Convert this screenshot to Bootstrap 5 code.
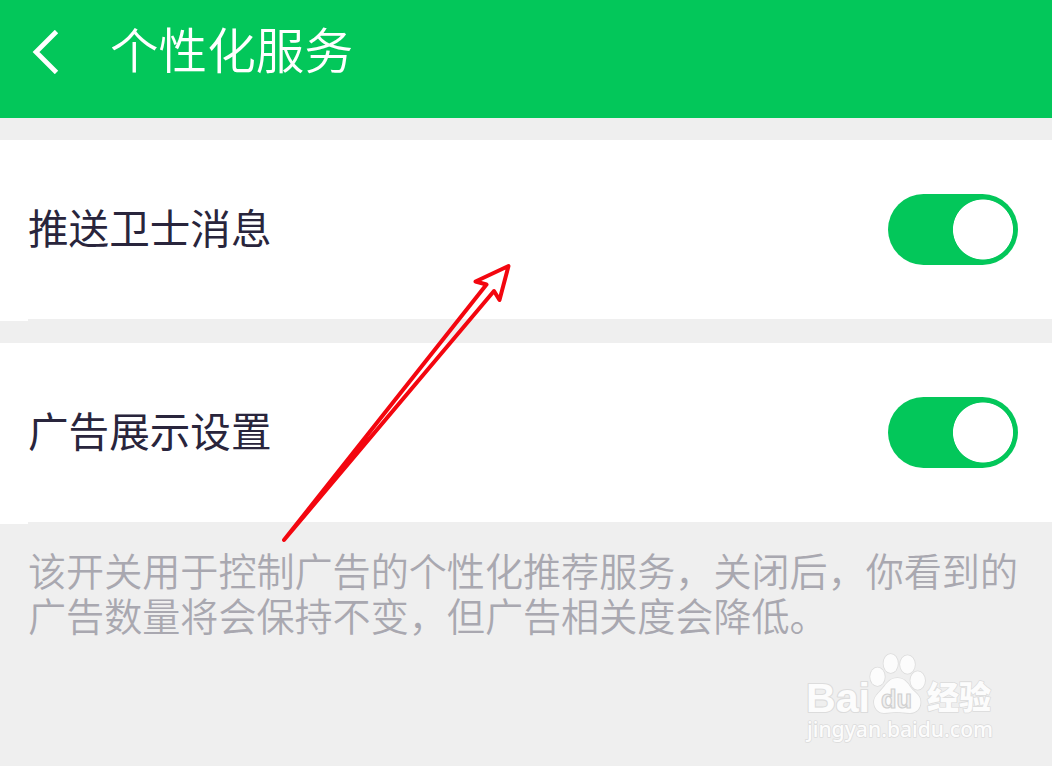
<!DOCTYPE html>
<html lang="zh-CN">
<head>
<meta charset="utf-8">
<meta name="viewport" content="width=device-width, initial-scale=1">
<title>个性化服务</title>
<link rel="stylesheet" href="https://cdn.jsdelivr.net/npm/bootstrap@5.3.0/dist/css/bootstrap.min.css">
<style>
  body { background: #efefef; font-family: "Noto Sans CJK SC", sans-serif; height: 766px; overflow: hidden; }
  .app-bar { height: 118px; background: #03c75a; padding: 0 0 14px 32px; }
  .app-title { font-size: 48.6px; font-weight: 350; line-height: 60px; margin-left: 50px; padding-bottom: 8px; }
  .settings { padding-top: 22px; gap: 22px; }
  .setting { height: 181px; padding: 0 34px 2px 28px; background: linear-gradient(#efefef, #efefef) 28px 100% / 100% 2px no-repeat #fff; }
  .setting-label { font-size: 40.6px; line-height: 56px; color: #29253c; padding-bottom: 6px; }
  .form-switch .toggle { width: 130px; height: 71px; border: 0; border-radius: 36px; box-shadow: none; }
  .toggle:checked { background-color: #03c75a; background-image: radial-gradient(circle at 95px 35.5px, #fff 29.6px, transparent 30.4px) !important; background-size: 100% 100% !important; background-position: 0 0 !important; }
  .note { font-size: 38.08px; line-height: 45px; font-weight: 350; color: #a9a8b0; padding: 23px 0 0 28px; white-space: nowrap; }
  .overlay { inset: 0; width: 1052px; height: 766px; pointer-events: none; }
</style>
</head>
<body class="position-relative">
<header class="app-bar d-flex align-items-center text-white">
  <svg width="28" height="44" viewBox="0 0 28 44" fill="none" stroke="#fff" stroke-width="4.8" aria-hidden="true"><path d="M24.5 1.500 4 22 24.5 42.500"/></svg>
  <h1 class="app-title mb-0">个性化服务</h1>
</header>
<main>
  <div class="settings d-flex flex-column">
    <div class="setting d-flex align-items-center justify-content-between">
      <label class="setting-label" for="push">推送卫士消息</label>
      <div class="form-switch d-flex p-0 m-0"><input class="toggle form-check-input m-0" type="checkbox" role="switch" id="push" checked></div>
    </div>
    <div class="setting d-flex align-items-center justify-content-between">
      <label class="setting-label" for="ads">广告展示设置</label>
      <div class="form-switch d-flex p-0 m-0"><input class="toggle form-check-input m-0" type="checkbox" role="switch" id="ads" checked></div>
    </div>
  </div>
  <p class="note mb-0">该开关用于控制广告的个性化推荐服务，关闭后，你看到的<br>广告数量将会保持不变，但广告相关度会降低。</p>
</main>
<svg class="overlay position-absolute" viewBox="0 0 1052 766" aria-hidden="true">
  <path d="M284 540 486.500 284.500 475.500 281.500 508.500 266 499.500 300 494 291Z" fill="none" stroke="#f3060f" stroke-width="4" stroke-linejoin="round"/>
  <g fill="#fcfcfc" stroke="#dcdcdc" stroke-width="1.600" paint-order="stroke" stroke-linejoin="round">
    <text x="806" y="711.500" font-family="Liberation Sans, sans-serif" font-weight="700" font-size="41" stroke-width="2.200" textLength="64" lengthAdjust="spacingAndGlyphs">Bai</text>
    <ellipse cx="877.500" cy="676.800" rx="7.300" ry="9.200"/>
    <ellipse cx="890.700" cy="663.500" rx="7.200" ry="9.500"/>
    <ellipse cx="907.500" cy="664.500" rx="7.400" ry="9.200"/>
    <ellipse cx="917.700" cy="680.500" rx="7.300" ry="9.200"/>
    <path d="M897.500 678C904 678 908 683 911 688 915 693 920.500 695 920.500 702 920.500 709 916 713 910 713 905 713 901 712 897 712 892 712 889 713 884 713 878 713 874 708 874 702 874 696 879 693 883 688 887 683 890 678 897.500 678Z"/>
    <text x="927" y="709" font-family="Noto Sans CJK SC, sans-serif" font-weight="900" font-size="32" textLength="64" lengthAdjust="spacingAndGlyphs">经验</text>
    <text x="807" y="737" font-family="Noto Sans, sans-serif" font-size="22" font-weight="500" textLength="186" lengthAdjust="spacingAndGlyphs">jingyan.baidu.com</text>
  </g>
  <text x="881" y="707.500" font-family="Liberation Sans, sans-serif" font-weight="700" font-size="26" fill="#f0f0f0" stroke="#d0d0d0" stroke-width="1.200" textLength="31" lengthAdjust="spacingAndGlyphs">du</text>
</svg>
<script src="https://cdn.jsdelivr.net/npm/bootstrap@5.3.0/dist/js/bootstrap.bundle.min.js"></script>
</body>
</html>
